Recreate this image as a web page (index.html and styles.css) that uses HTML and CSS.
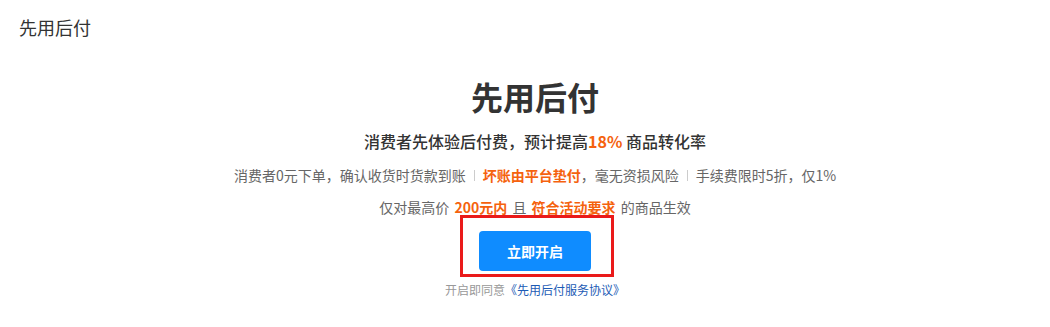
FILE: index.html
```html
<!DOCTYPE html>
<html lang="zh-CN">
<head>
  <meta charset="UTF-8">
  <title>先用后付</title>
  <link rel="stylesheet" href="styles.css">
</head>
<body>
  <div class="page-header">先用后付</div>

  <div class="intro">
    <h1 class="intro-title">先用后付</h1>
    <p class="intro-sub">消费者先体验后付费，预计提高<span class="hl">18%</span> 商品转化率</p>
    <p class="intro-points">
      <span>消费者0元下单，确认收货时货款到账</span>
      <span class="sep"></span>
      <span><b class="hl">坏账由平台垫付</b>，毫无资损风险</span>
      <span class="sep"></span>
      <span>手续费限时5折，仅1%</span>
    </p>
    <p class="intro-limit">仅对最高价 <b class="hl">200元内</b> 且 <b class="hl">符合活动要求</b> 的商品生效</p>

    <div class="action">
      <button class="btn-primary">立即开启</button>
      <span class="mark"></span>
    </div>
    <p class="agree">开启即同意<a href="#" class="agree-link">《先用后付服务协议》</a></p>
  </div>
</body>
</html>
```

FILE: styles.css
```css
body {
  margin: 0;
  font-family: "Noto Sans CJK SC", "Liberation Sans", sans-serif;
  color: #333;
  background: #fff;
}
.page-header {
  padding: 0 19px;
  font-size: 18px;
  line-height: 54px;
  color: #333;
}
.intro {
  display: flex;
  flex-direction: column;
  align-items: center;
  padding-left: 20px;
}
.intro-title {
  margin: 20px 0 0;
  font-size: 32px;
  line-height: 44px;
  font-weight: 700;
  color: #333;
}
.intro-sub {
  margin: 11px 0 0;
  font-size: 16px;
  line-height: 24px;
  font-weight: 500;
  color: #333;
}
.hl {
  color: #f5620e;
  font-weight: 700;
}
.intro-points {
  display: flex;
  align-items: center;
  gap: 7px;
  margin: 11px 0 0;
  font-size: 14px;
  line-height: 22px;
  color: #666;
}
.sep {
  width: 1px;
  height: 11px;
  background: #ccc;
  margin: 0 1px;
}
.intro-limit {
  margin: 10px 0 0;
  font-size: 14px;
  line-height: 22px;
  color: #666;
}
.intro-limit b {
  padding: 0 2px;
}
.action {
  position: relative;
  margin-top: 13px;
}
.btn-primary {
  display: block;
  width: 112px;
  height: 40px;
  border: none;
  border-radius: 4px;
  background: #0f8cff;
  color: #fff;
  font-family: inherit;
  font-size: 14px;
  font-weight: 700;
  cursor: pointer;
}
.mark {
  position: absolute;
  left: -19px;
  top: -16px;
  right: -23px;
  bottom: -6px;
  border: 3px solid #ea1a1a;
  pointer-events: none;
}
.agree {
  margin: 10px 0 0;
  font-size: 12px;
  line-height: 18px;
  color: #999;
}
.agree-link {
  color: #1d5bb5;
  text-decoration: none;
}
```
